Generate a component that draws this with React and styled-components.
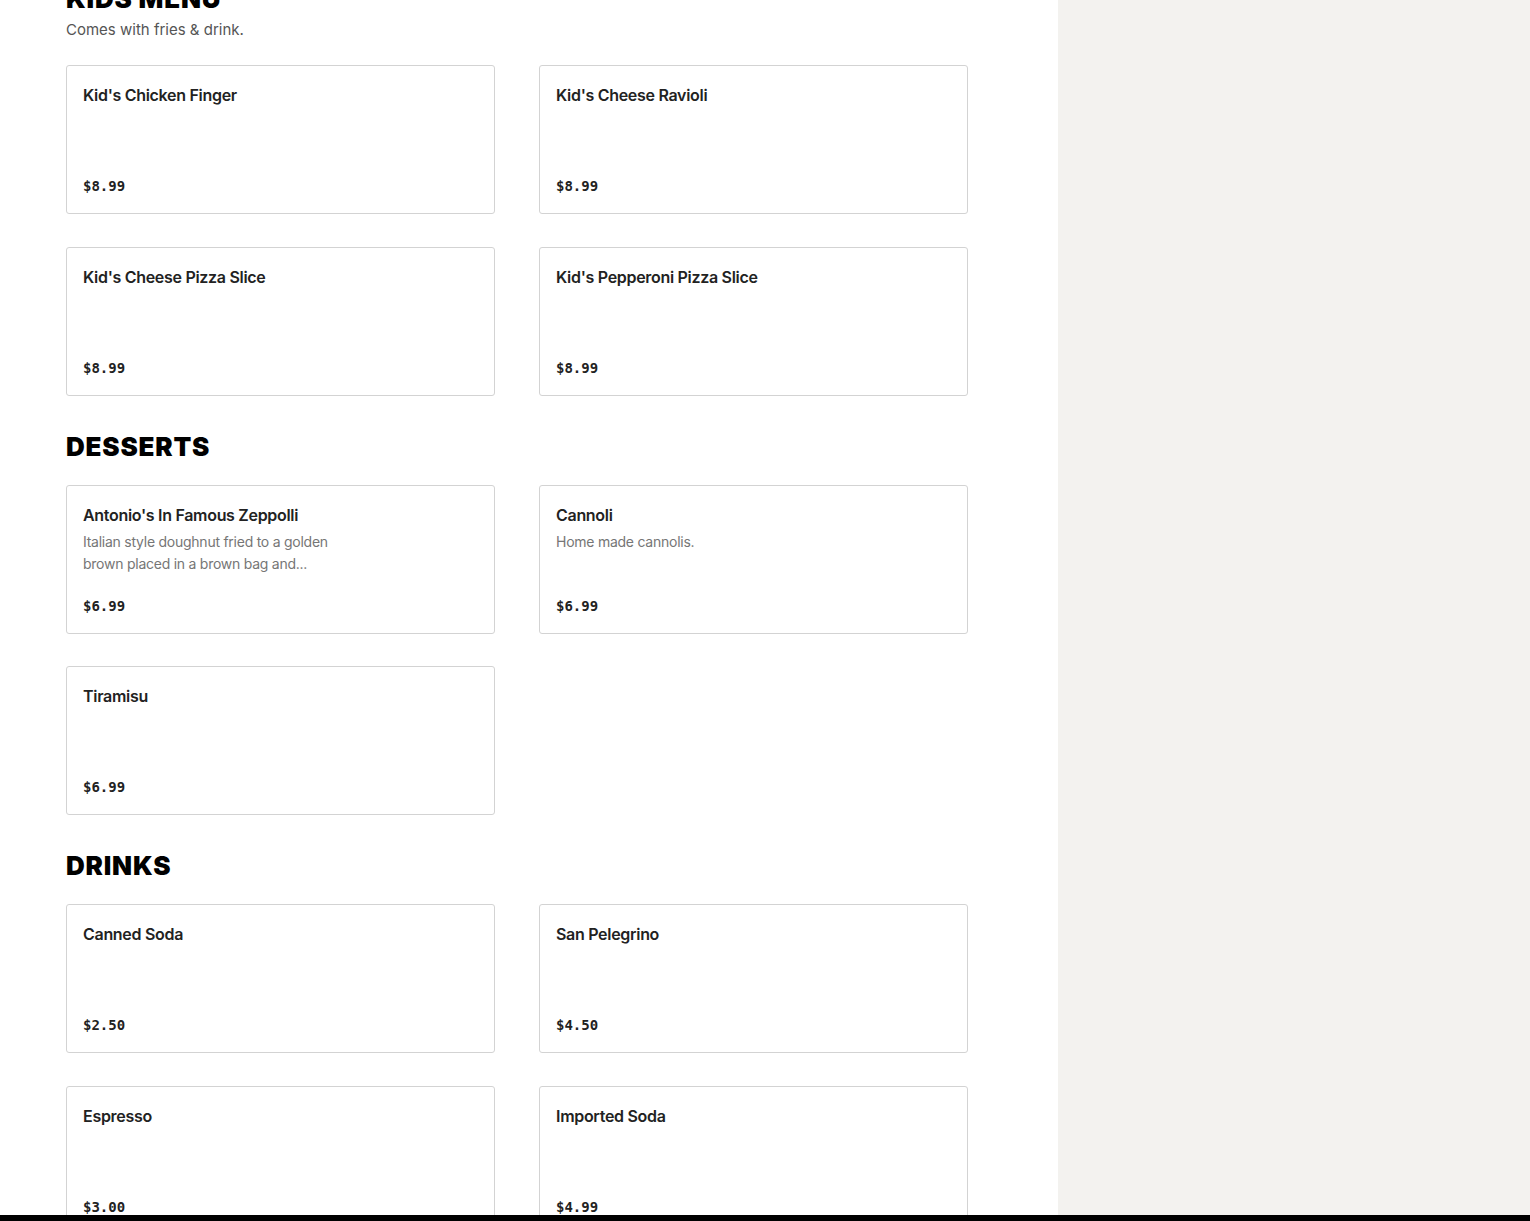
import styled, { createGlobalStyle } from "styled-components";

const GlobalStyle = createGlobalStyle`
	html, body {
		margin: 0;
		padding: 0;
		background: #ffffff;
		font-family: Inter, "Liberation Sans", sans-serif;
		overflow: hidden;
	}
`;

const Page = styled.div`
	display: flex;
	height: 1221px;
	overflow: hidden;
`;

const Main = styled.main`
	flex: 0 0 1058px;
	padding: 0 0 0 66px;
	box-sizing: border-box;
`;

const Scroller = styled.div`
	margin-top: -17px;
	width: 902px;
`;

const Aside = styled.aside`
	flex: 1;
	background: #f3f2ef;
`;

const Section = styled.section`
	margin-bottom: 35px;
`;

const SectionTitle = styled.h2`
	margin: 0;
	font-family: Inter, "Liberation Sans", sans-serif;
	font-size: 26px;
	font-weight: 900;
	line-height: 32px;
	letter-spacing: 0.8px;
	color: #000000;
	text-transform: uppercase;
`;

const SectionNote = styled.p`
	margin: 4px 0 0;
	font-size: 15px;
	line-height: 22px;
	color: #555555;
`;

const Grid = styled.div`
	display: grid;
	grid-template-columns: 429px 429px;
	column-gap: 44px;
	row-gap: 32.5px;
	margin-top: ${(p) => (p.$withNote ? "24px" : "22px")};
`;

const Card = styled.div`
	box-sizing: border-box;
	height: 149px;
	display: flex;
	flex-direction: column;
	padding: 19px 16px 17px;
	border: 1px solid #d3d3d3;
	border-radius: 3px;
	background: #ffffff;
`;

const ItemName = styled.h3`
	margin: 0;
	font-size: 16px;
	font-weight: 600;
	line-height: 20px;
	letter-spacing: -0.3px;
	color: #222222;
`;

const ItemDesc = styled.p`
	margin: 6px 0 0;
	max-width: 260px;
	font-size: 14px;
	line-height: 22px;
	letter-spacing: -0.25px;
	color: #767676;
`;

const Price = styled.span`
	margin-top: auto;
	font-family: "DejaVu Sans Mono", "Liberation Mono", monospace;
	font-size: 14px;
	font-weight: bold;
	line-height: 20px;
	color: #222222;
`;

const BottomBar = styled.div`
	position: fixed;
	left: 0;
	right: 0;
	bottom: 0;
	height: 6px;
	background: #000000;
`;

const menu = [
	{
		title: "Kids Menu",
		note: "Comes with fries & drink.",
		items: [
			{ name: "Kid's Chicken Finger", price: "$8.99" },
			{ name: "Kid's Cheese Ravioli", price: "$8.99" },
			{ name: "Kid's Cheese Pizza Slice", price: "$8.99" },
			{ name: "Kid's Pepperoni Pizza Slice", price: "$8.99" },
		],
	},
	{
		title: "Desserts",
		items: [
			{
				name: "Antonio's In Famous Zeppolli",
				desc: "Italian style doughnut fried to a golden brown placed in a brown bag and...",
				price: "$6.99",
			},
			{ name: "Cannoli", desc: "Home made cannolis.", price: "$6.99" },
			{ name: "Tiramisu", price: "$6.99" },
		],
	},
	{
		title: "Drinks",
		items: [
			{ name: "Canned Soda", price: "$2.50" },
			{ name: "San Pelegrino", price: "$4.50" },
			{ name: "Espresso", price: "$3.00" },
			{ name: "Imported Soda", price: "$4.99" },
		],
	},
];

const App = () => {
	return (
		<>
			<GlobalStyle />
			<Page>
				<Main>
					<Scroller>
						{menu.map((section) => (
							<Section key={section.title}>
								<SectionTitle>{section.title}</SectionTitle>
								{section.note && <SectionNote>{section.note}</SectionNote>}
								<Grid $withNote={!!section.note}>
									{section.items.map((item) => (
										<Card key={item.name}>
											<ItemName>{item.name}</ItemName>
											{item.desc && <ItemDesc>{item.desc}</ItemDesc>}
											<Price>{item.price}</Price>
										</Card>
									))}
								</Grid>
							</Section>
						))}
					</Scroller>
				</Main>
				<Aside />
			</Page>
			<BottomBar />
		</>
	);
};

export default App;
